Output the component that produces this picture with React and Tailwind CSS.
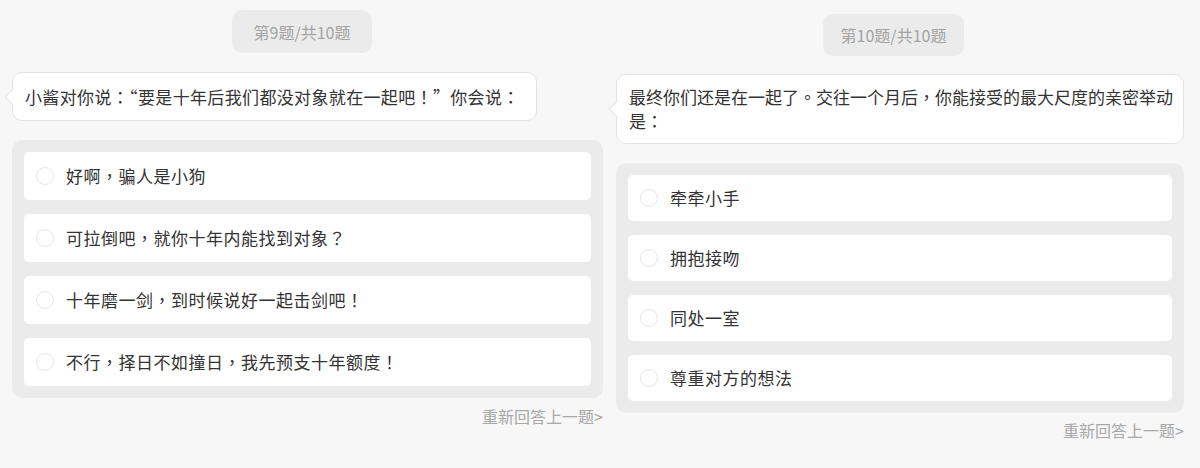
import React from "react";

const font = { fontFamily: '"Noto Sans CJK TC", "Noto Sans CJK SC", "Noto Sans", sans-serif' };

function Radio() {
  return <span className="block w-[18px] h-[18px] shrink-0 rounded-full border border-[#e6e6e6] bg-white" />;
}

function Option({ text, h }) {
  return (
    <div className={`flex items-center bg-white rounded-[5px] pl-3 gap-3 ${h}`}>
      <Radio />
      <span className="text-[17px] leading-6 tracking-[0.5px] text-[#333]">{text}</span>
    </div>
  );
}

function Tail() {
  return (
    <span className="absolute left-[-6px] top-1/2 -mt-[6px] w-[12px] h-[12px] rotate-45 bg-white border-l border-b border-[#e3e3e3]" />
  );
}

export default function App() {
  const left = [
    "好啊，骗人是小狗",
    "可拉倒吧，就你十年内能找到对象？",
    "十年磨一剑，到时候说好一起击剑吧！",
    "不行，择日不如撞日，我先预支十年额度！",
  ];
  const right = ["牵牵小手", "拥抱接吻", "同处一室", "尊重对方的想法"];
  return (
    <div className="w-[1200px] h-[468px] bg-[#f7f7f7] flex" style={font}>
      <div className="ml-3 w-[591px] flex flex-col items-start pt-[10px]">
        <div className="ml-[220px] w-[140px] h-[43px] rounded-[10px] bg-[#ebebeb] flex items-center justify-center text-[16px] text-[#a3a3a3]">
          第9题/共10题
        </div>
        <div className="relative mt-[19px] bg-white border border-[#e3e3e3] rounded-[10px] pl-3 pr-[16px] py-[11.5px] text-[17px] leading-6 tracking-[0.35px] text-[#333]">
          <Tail />
          小酱对你说：“要是十年后我们都没对象就在一起吧！”你会说：
        </div>
        <div className="mt-[19px] w-full bg-[#ebebeb] rounded-[10px] p-3 flex flex-col gap-[14px]">
          {left.map((t) => (
            <Option key={t} text={t} h="h-[48px]" />
          ))}
        </div>
        <div className="self-end mt-[6px] text-[16px] leading-6 text-[#a8a8a8]">重新回答上一题&gt;</div>
      </div>
      <div className="ml-[13px] w-[568px] flex flex-col items-start pt-[14px]">
        <div className="ml-[207px] w-[141px] h-[42px] rounded-[10px] bg-[#ebebeb] flex items-center justify-center text-[16px] text-[#a3a3a3]">
          第10题/共10题
        </div>
        <div className="relative mt-[18px] w-full bg-white border border-[#e3e3e3] rounded-[10px] pl-3 pr-[8px] py-[10px] text-[17px] leading-6 text-[#333]">
          <Tail />
          最终你们还是在一起了。交往一个月后，你能接受的最大尺度的亲密举动是：
        </div>
        <div className="mt-[19px] w-full bg-[#ebebeb] rounded-[10px] p-3 flex flex-col gap-[14px]">
          {right.map((t) => (
            <Option key={t} text={t} h="h-[46px]" />
          ))}
        </div>
        <div className="self-end mt-[5px] text-[16px] leading-6 text-[#a8a8a8]">重新回答上一题&gt;</div>
      </div>
    </div>
  );
}
